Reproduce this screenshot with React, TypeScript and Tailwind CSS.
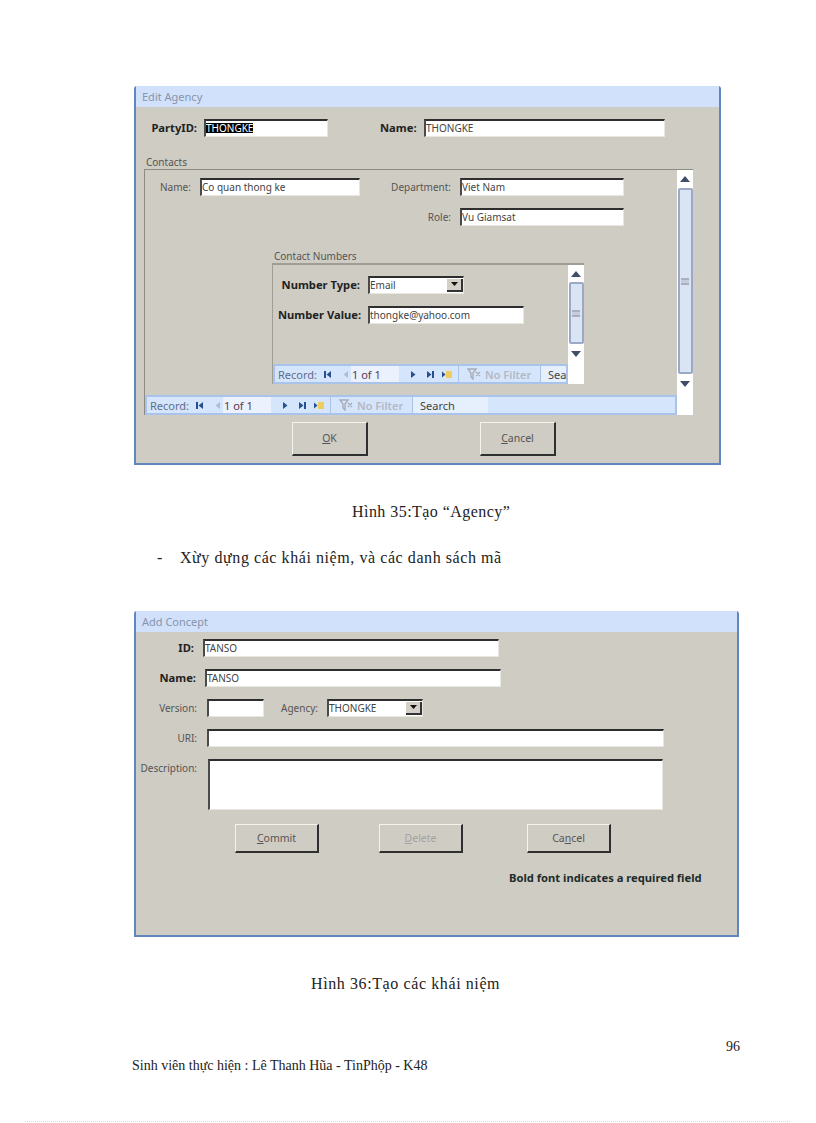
import type { ReactNode } from 'react';

const ui = "font-['Noto_Sans','Liberation_Sans',sans-serif] text-[10px] leading-none text-[#3c3c3c]";

function Sunken({ className, children }: { className: string; children?: ReactNode }) {
  return (
    <div className={`flex items-center shrink-0 overflow-hidden bg-white border-t-2 border-l-2 border-t-[#2e2e2e] border-l-[#4a4a4a] border-b border-r border-b-[#e8e8e0] border-r-[#e8e8e0] pb-[1px] text-[#444] ${className}`}>
      {children}
    </div>
  );
}

function Combo({ className, value }: { className: string; value: string }) {
  return (
    <Sunken className={`justify-between ${className}`}>
      <span>{value}</span>
      <span className="flex h-[13px] w-[16px] items-center justify-center border-r-2 border-b-2 border-r-[#333] border-b-[#333] bg-[#d4d0c8]">
        <svg width="7" height="4" viewBox="0 0 7 4"><path d="M0 0h7L3.5 4z" fill="#111" /></svg>
      </span>
    </Sunken>
  );
}

function Label({ className, children, bold }: { className: string; children: ReactNode; bold?: boolean }) {
  return (
    <span className={`shrink-0 text-right whitespace-nowrap ${bold ? 'text-[11.2px] font-bold text-[#222]' : 'text-[#555]'} ${className}`}>
      {children}
    </span>
  );
}

function Button({ className, children, disabled }: { className: string; children: ReactNode; disabled?: boolean }) {
  return (
    <div className={`flex shrink-0 items-center justify-center border-t border-l border-t-[#f4f4ee] border-l-[#f4f4ee] border-r-2 border-b-2 border-r-[#2f2f2f] border-b-[#2f2f2f] text-[10.5px] ${disabled ? 'text-[#a3a3a0]' : 'text-[#555]'} ${className}`}>
      {children}
    </div>
  );
}

function Arrow({ down }: { down?: boolean }) {
  return (
    <svg width="10" height="6" viewBox="0 0 10 6">
      <path d={down ? 'M0 0h10L5 6z' : 'M0 6h10L5 0z'} fill="#3f4d66" />
    </svg>
  );
}

function Scrollbar({ top, thumb, bottom }: { top: number; thumb: string; bottom: string }) {
  return (
    <div className="flex w-[16px] shrink-0 flex-col items-center bg-white">
      <div className="flex w-full items-center justify-center" style={{ height: top }}>
        <Arrow />
      </div>
      <div className={`flex w-[15px] items-center justify-center rounded-[2px] border-2 border-[#9aa9c6] bg-[#dbe4f4] ${thumb}`}>
        <div className="h-[7px] w-[8px] border-y-2 border-y-[#a9b0bd] bg-[#c6ccd8]" />
      </div>
      <div className={`flex w-full justify-center pt-[7px] ${bottom}`}>
        <Arrow down />
      </div>
    </div>
  );
}

function NavIcon({ kind, dim }: { kind: 'first' | 'prev' | 'next' | 'last' | 'new'; dim?: boolean }) {
  const fill = dim ? '#b4bccb' : '#27508f';
  return (
    <svg width="10" height="9" viewBox="0 0 10 9" className="shrink-0">
      {kind === 'first' && <path d="M1 1h2v7H1zM8 1v7L3.5 4.5z" fill={fill} />}
      {kind === 'prev' && <path d="M7 1v7L2.5 4.5z" fill={fill} />}
      {kind === 'next' && <path d="M3 1v7l4.5-3.500z" fill={fill} />}
      {kind === 'last' && <path d="M2 1v7l4.500-3.500zM7 1h2v7H7z" fill={fill} />}
      {kind === 'new' && (
        <>
          <path d="M0 1.500v6l3.500-3z" fill={fill} />
          <rect x="4" y="1" width="6" height="7" fill="#eccd5e" />
        </>
      )}
    </svg>
  );
}

function RecordNav({ search }: { search: string }) {
  return (
    <div className="flex h-[20px] shrink-0 items-center overflow-hidden border-2 border-[#a9c3ea] bg-[#d5e5fc] text-[11px] text-[#5f6d8c]">
      <span className="ml-[3px] w-[45px] shrink-0">Record:</span>
      <NavIcon kind="first" />
      <span className="ml-[8px]"><NavIcon kind="prev" dim /></span>
      <div className="flex h-[16px] w-[48px] shrink-0 items-center bg-[#ebf2fd] pl-[1px] text-[#5a3a50]">1 of 1</div>
      <span className="ml-[9px]"><NavIcon kind="next" /></span>
      <span className="ml-[7px]"><NavIcon kind="last" /></span>
      <span className="ml-[7px]"><NavIcon kind="new" /></span>
      <div className="ml-[6px] h-full w-[1px] shrink-0 bg-[#a9c3ea]" />
      <div className="flex h-full w-[81px] shrink-0 items-center gap-[4px] pl-[8px] text-[#b3b8c2]">
        <svg width="14" height="12" viewBox="0 0 14 12" className="shrink-0">
          <path d="M1 1h8L6 5v6L4 9V5zM9 4l4 4M13 4L9 8" stroke="#a7adb8" strokeWidth="1.400" fill="none" />
        </svg>
        <span className="whitespace-nowrap font-semibold">No Filter</span>
      </div>
      <div className="h-full w-[1px] shrink-0 bg-[#a9c3ea]" />
      <div className="flex h-full w-[75px] shrink-0 items-center bg-[#e6effc] pl-[7px] text-[#444]">{search}</div>
    </div>
  );
}

function WindowFrame({ title, className, children }: { title: string; className: string; children: ReactNode }) {
  return (
    <div className={`flex flex-col rounded-t-[3px] border-x-2 border-b-2 border-[#5f86bd] bg-[#cfccc4] ${ui} ${className}`}>
      <div className="flex h-[21px] shrink-0 items-center bg-[#d2e1fb] pl-[6px] text-[11px] text-[#8794ab]">{title}</div>
      {children}
    </div>
  );
}

function EditAgency() {
  return (
    <WindowFrame title="Edit Agency" className="ml-[134px] h-[379px] w-[587px]">
      <div className="mt-[12px] flex h-[18px] items-center">
        <Label bold className="ml-[12px] w-[49px] text-left">PartyID:</Label>
        <Sunken className="ml-[7px] h-[18px] w-[124px]"><span className="bg-black text-white">THONGKE</span></Sunken>
        <Label bold className="ml-[52px] w-[36px]">Name:</Label>
        <Sunken className="ml-[8px] h-[18px] w-[241px]">THONGKE</Sunken>
      </div>
      <div className="ml-[10px] mt-[17px] flex h-[15px] items-center text-[#555]">Contacts</div>
      <div className="ml-[8px] flex h-[246px] w-[549px] border-t border-l border-[#8e8b84]">
        <div className="flex min-w-0 flex-1 flex-col">
          <div className="flex-1">
            <div className="mt-[8px] flex h-[18px] items-center">
              <Label className="ml-[15px] w-[30px]">Name:</Label>
              <Sunken className="ml-[10px] h-[18px] w-[160px]">Co quan thong ke</Sunken>
              <Label className="ml-[29px] w-[62px]">Department:</Label>
              <Sunken className="ml-[9px] h-[18px] w-[164px]">Viet Nam</Sunken>
            </div>
            <div className="mt-[12px] flex h-[18px] items-center">
              <Label className="ml-[280px] w-[26px]">Role:</Label>
              <Sunken className="ml-[9px] h-[18px] w-[164px]">Vu Giamsat</Sunken>
            </div>
            <div className="ml-[129px] mt-[22px] flex h-[15px] items-center text-[#555]">Contact Numbers</div>
            <div className="ml-[127px] flex h-[121px] w-[312px] border-t-2 border-l border-[#a09d95]">
              <div className="flex min-w-0 flex-1 flex-col">
                <div className="mt-[11px] flex h-[18px] items-center">
                  <Label bold className="ml-[8px] w-[79px]">Number Type:</Label>
                  <Combo className="ml-[8px] h-[18px] w-[96px]" value="Email" />
                </div>
                <div className="mt-[12px] flex h-[18px] items-center">
                  <Label bold className="ml-[5px] w-[82px]">Number Value:</Label>
                  <Sunken className="ml-[8px] h-[18px] w-[156px]">thongke@yahoo.com</Sunken>
                </div>
                <div className="mt-auto"><RecordNav search="Search" /></div>
              </div>
              <Scrollbar top={17} thumb="h-[62px]" bottom="h-[40px]" />
            </div>
          </div>
          <RecordNav search="Search" />
        </div>
        <Scrollbar top={18} thumb="h-[186px]" bottom="h-[41px]" />
      </div>
      <div className="mt-[7px] flex">
        <Button className="ml-[156px] h-[34px] w-[76px]"><span><u>O</u>K</span></Button>
        <Button className="ml-[112px] h-[34px] w-[76px]"><span><u>C</u>ancel</span></Button>
      </div>
    </WindowFrame>
  );
}

function AddConcept() {
  return (
    <WindowFrame title="Add Concept" className="ml-[134px] h-[326px] w-[605px]">
      <div className="mt-[7px] flex h-[18px] items-center">
        <Label bold className="w-[58px]">ID:</Label>
        <Sunken className="ml-[9px] h-[18px] w-[296px]">TANSO</Sunken>
      </div>
      <div className="mt-[12px] flex h-[18px] items-center">
        <Label bold className="w-[60px]">Name:</Label>
        <Sunken className="ml-[9px] h-[18px] w-[296px]">TANSO</Sunken>
      </div>
      <div className="mt-[12px] flex h-[18px] items-center">
        <Label className="w-[61px]">Version:</Label>
        <Sunken className="ml-[10px] h-[18px] w-[57px]" />
        <Label className="ml-[14px] w-[40px]">Agency:</Label>
        <Combo className="ml-[9px] h-[18px] w-[96px]" value="THONGKE" />
      </div>
      <div className="mt-[12px] flex h-[18px] items-center">
        <Label className="w-[61px]">URI:</Label>
        <Sunken className="ml-[10px] h-[18px] w-[457px]" />
      </div>
      <div className="mt-[12px] flex h-[51px] items-start">
        <Label className="w-[61px] pt-[4px]">Description:</Label>
        <Sunken className="ml-[11px] h-[51px] w-[455px]" />
      </div>
      <div className="mt-[14px] flex">
        <Button className="ml-[99px] h-[29px] w-[84px]"><span><u>C</u>ommit</span></Button>
        <Button disabled className="ml-[60px] h-[29px] w-[84px]"><span><u>D</u>elete</span></Button>
        <Button className="ml-[64px] h-[29px] w-[84px]"><span>Ca<u>n</u>cel</span></Button>
      </div>
      <div className="ml-[373px] mt-[18px] flex h-[14px] items-center whitespace-nowrap text-[11.2px] font-bold text-[#1c2b2b]">
        Bold font indicates a required field
      </div>
    </WindowFrame>
  );
}

export default function App() {
  return (
    <div className="flex h-[1123px] w-[816px] flex-col overflow-hidden bg-white pt-[86px] font-['Liberation_Serif',serif] text-[#222]">
      <EditAgency />
      <div className="ml-[352px] mt-[37px] h-[20px] text-[16px] leading-[20px] tracking-[0.45px] whitespace-nowrap">Hình 35:Tạo “Agency”</div>
      <div className="mt-[26px] flex h-[20px] text-[16px] leading-[20px] whitespace-nowrap">
        <span className="ml-[157px] w-[23px]">-</span>
        <span className="tracking-[0.57px]">Xừy dựng các khái niệm, và các danh sách mã</span>
      </div>
      <div className="mt-[43px]"><AddConcept /></div>
      <div className="ml-[311px] mt-[37px] h-[20px] text-[16px] leading-[20px] tracking-[0.6px] whitespace-nowrap">Hình 36:Tạo các khái niệm</div>
      <div className="ml-[726px] mt-[45px] h-[16px] text-[14px] leading-[16px]">96</div>
      <div className="ml-[132px] mt-[3px] h-[16px] text-[14px] leading-[16px] whitespace-nowrap">Sinh viên thực hiện : Lê Thanh Hũa - TinPhộp - K48</div>
      <div className="ml-[25px] mt-[47px] w-[765px] border-t border-dotted border-[#d8dcdc]" />
    </div>
  );
}
